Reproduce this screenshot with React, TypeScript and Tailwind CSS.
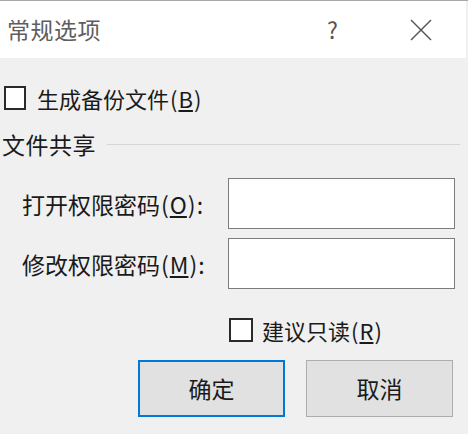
import React from "react";

const font = {
  fontFamily: "'Noto Sans CJK SC', 'Microsoft YaHei', 'Noto Sans', sans-serif",
};

const Key = ({ k }: { k: string }) => (
  <>
    <span className="mx-[1px]">(</span>
    <span className="underline underline-offset-[2px]">{k}</span>
    <span className="mx-[1px]">)</span>
  </>
);

export default function App() {
  return (
    <div
      className="w-[468px] h-[434px] flex flex-col bg-[#f0f0f0] border-t border-[#a8a8a8] overflow-hidden text-[#1a1a1a]"
      style={font}
    >
      {/* title bar */}
      <div className="h-[57px] shrink-0 bg-white flex items-center mr-[2px]">
        <span className="ml-[7px] text-[23px] leading-none text-[#5e5e5e] tracking-[0.5px]">
          常规选项
        </span>
        <span className="ml-auto text-[23px] leading-none text-[#555] mr-[72px]">
          ?
        </span>
        <svg
          width="22"
          height="22"
          viewBox="0 0 22 22"
          className="mr-[34px]"
          stroke="#555"
          strokeWidth="1.4"
          fill="none"
        >
          <line x1="1" y1="1" x2="21" y2="21" />
          <line x1="21" y1="1" x2="1" y2="21" />
        </svg>
      </div>

      {/* backup checkbox */}
      <div className="mt-[28px] flex items-center h-[24px]">
        <div className="ml-[4px] w-[22px] h-[24px] border-2 border-[#2a2a2a] bg-white" />
        <span className="ml-[11px] text-[22px] leading-[24px]">
          生成备份文件<Key k="B" />
        </span>
      </div>

      {/* file sharing */}
      <div className="mt-[22px] flex items-center h-[24px]">
        <span className="ml-[2px] text-[23px] leading-[24px] tracking-[0.5px]">文件共享</span>
        <div className="flex-1 h-px bg-[#d6d6d6] ml-[11px] mr-[8px]" />
      </div>

      <div className="mt-[22px] flex items-center">
        <span className="w-[228px] pl-[22px] text-[23px] leading-[24px]">
          打开权限密码<Key k="O" />:
        </span>
        <div className="w-[227px] h-[51px] border border-[#7c7c7c] bg-white" />
      </div>

      <div className="mt-[9px] flex items-center">
        <span className="w-[228px] pl-[22px] text-[23px] leading-[24px]">
          修改权限密码<Key k="M" />:
        </span>
        <div className="w-[227px] h-[51px] border border-[#7c7c7c] bg-white" />
      </div>

      {/* read-only */}
      <div className="mt-[29px] flex items-center h-[24px]">
        <div className="ml-[229px] w-[24px] h-[24px] border-2 border-[#2a2a2a] bg-white" />
        <span className="ml-[9px] text-[22px] leading-[24px]">
          建议只读<Key k="R" />
        </span>
      </div>

      {/* buttons */}
      <div className="mt-[18px] flex">
        <button className="ml-[138px] w-[147px] h-[57px] border-2 border-[#0078d7] bg-[#e1e1e1] text-[23px] text-[#1a1a1a]">
          确定
        </button>
        <button className="ml-[21px] w-[147px] h-[57px] border border-[#adadad] bg-[#e1e1e1] text-[23px] text-[#1a1a1a]">
          取消
        </button>
      </div>
    </div>
  );
}
